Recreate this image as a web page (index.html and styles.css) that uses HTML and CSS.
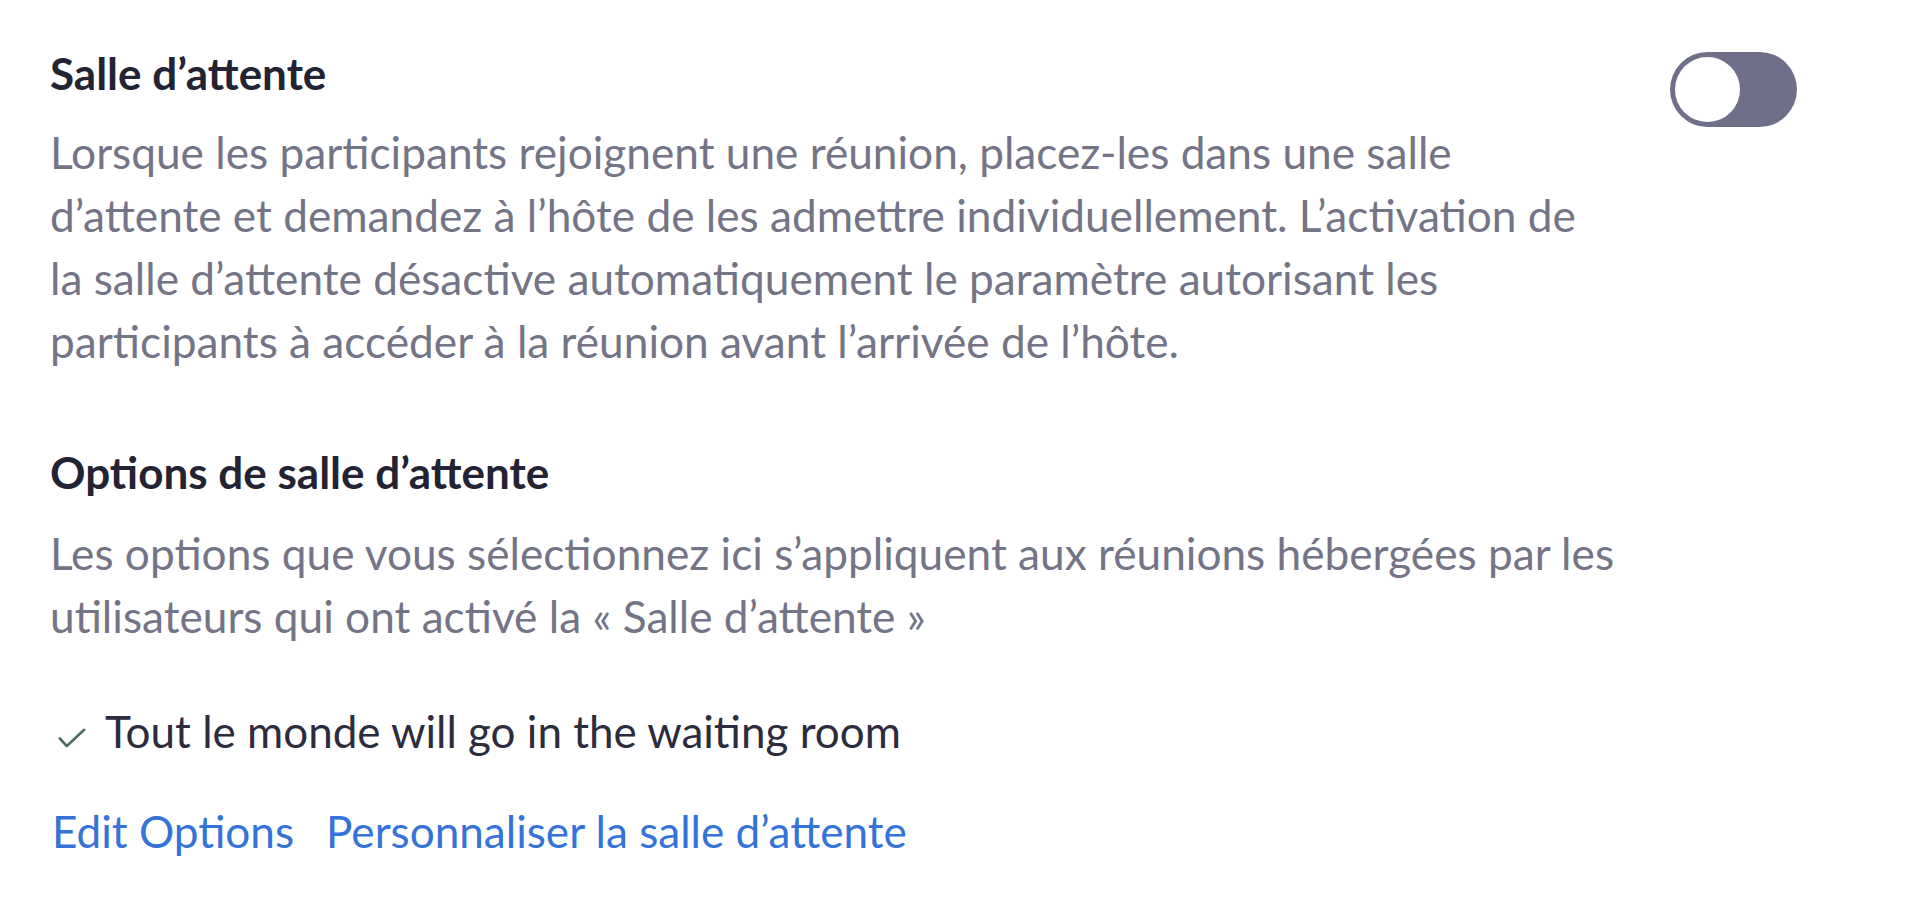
FILE: index.html
```html
<!DOCTYPE html>
<html lang="fr">
<head>
<meta charset="utf-8">
<title>Salle d'attente</title>
<link rel="stylesheet" href="styles.css">
</head>
<body>
<main class="page">
  <section class="setting">
    <div class="setting-text">
      <h2 class="setting-title">Salle d’attente</h2>
      <p class="setting-desc">Lorsque les participants rejoignent une réunion, placez-les dans une salle d’attente et demandez à l’hôte de les admettre individuellement. L’activation de la salle d’attente désactive automatiquement le paramètre autorisant les participants à accéder à la réunion avant l’arrivée de l’hôte.</p>
    </div>
    <div class="toggle" role="switch" aria-checked="false"><span class="knob"></span></div>
  </section>

  <section class="options">
    <h2 class="options-title">Options de salle d’attente</h2>
    <p class="options-desc">Les options que vous sélectionnez ici s’appliquent aux réunions hébergées par les utilisateurs qui ont activé la « Salle d’attente »</p>
    <div class="check-line">
      <svg class="check" width="28" height="20" viewBox="0 0 28 20" aria-hidden="true"><path d="M1.8 10.5 L8.8 18 L26.2 1.8" fill="none" stroke="#4a6e60" stroke-width="2.6" stroke-linecap="round" stroke-linejoin="round"/></svg>
      <span>Tout le monde will go in the waiting room</span>
    </div>
    <div class="links">
      <a href="#" class="link">Edit Options</a>
      <a href="#" class="link">Personnaliser la salle d’attente</a>
    </div>
  </section>
</main>
</body>
</html>
```
FILE: styles.css
```css
html, body {
  margin: 0;
  padding: 0;
  background: #ffffff;
}

body {
  font-family: Lato, "Noto Sans", "Liberation Sans", sans-serif;
  color: #232333;
}

.page {
  padding: 46px 0 0 50px;
  width: 1747px;
}

.setting {
  display: flex;
  align-items: flex-start;
  justify-content: space-between;
}

.setting-text {
  width: 1545px;
}

.setting-title,
.options-title {
  margin: 0;
  font-size: 44px;
  line-height: 54px;
  font-weight: 700;
  color: #232333;
}

.setting-desc,
.options-desc {
  margin: 20px 0 0;
  font-size: 44.2px;
  line-height: 63px;
  color: #747487;
}

.toggle {
  margin-top: 6px;
  width: 127px;
  height: 75px;
  box-sizing: border-box;
  border-radius: 38px;
  background: #6f6f89;
  padding: 5px;
  display: flex;
  align-items: center;
}

.knob {
  width: 65px;
  height: 65px;
  border-radius: 50%;
  background: #ffffff;
}

.options {
  margin-top: 73px;
  width: 1580px;
}

.options-desc {
  margin-top: 22px;
}

.check-line {
  margin-top: 57px;
  display: flex;
  align-items: baseline;
  gap: 19px;
  font-size: 44px;
  line-height: 54px;
  color: #2c2c3e;
}

.check {
  margin-left: 8px;
  flex: none;
  align-self: flex-end;
  margin-bottom: 10px;
}

.links {
  margin-top: 46px;
  padding-left: 2px;
  display: flex;
  gap: 32px;
  font-size: 44.1px;
  line-height: 54px;
}

.link {
  color: #3573d9;
  text-decoration: none;
}
```
